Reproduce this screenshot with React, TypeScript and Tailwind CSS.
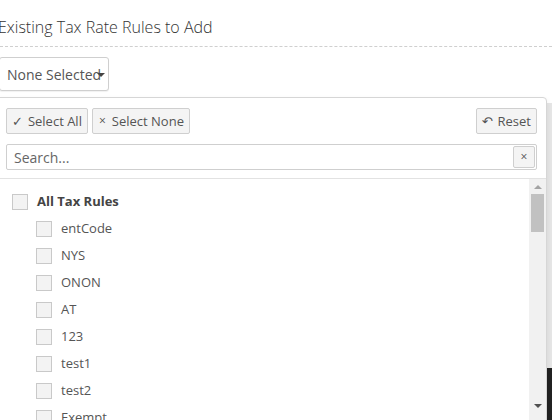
import React from "react";

const children = ["entCode", "NYS", "ONON", "AT", "123", "test1", "test2", "Exempt"];

const Box = () => (
  <span className="inline-block w-[16px] h-[16px] border border-[#c9c9c9] bg-[#f3f3f3] shrink-0" />
);

const ToolButton: React.FC<{ icon: string; label: string; iconClass?: string }> = ({ icon, label, iconClass }) => (
  <button className="h-[26px] px-[5px] flex items-center gap-[5px] border border-[#cfcfcf] bg-[#f4f4f4] rounded-[2px] text-[13px] text-[#555] leading-none">
    <span className={iconClass ?? "text-[12px]"}>{icon}</span>
    <span>{label}</span>
  </button>
);

export default function App() {
  return (
    <div className="relative w-[552px] h-[420px] overflow-hidden bg-white font-['Open_Sans',sans-serif] text-[#555]">
      {/* page elements behind the dropdown */}
      <div className="absolute left-[547px] top-[103px] w-[5px] h-[265px] bg-[#e6e6e6]" />
      <div className="absolute left-[547px] top-[368px] w-[5px] h-[52px] bg-[#222]" />

      <div className="pt-[16px] pb-[8px] border-b border-dashed border-[#cfcfcf]">
        <h2 className="ml-[-2px] text-[16px] leading-[22px] font-light text-[#333]">Existing Tax Rate Rules to Add</h2>
      </div>

      <div className="mt-[10px] ml-[-1px]">
        <button className="relative h-[34px] w-[110px] pl-[7px] text-left border border-[#cfcfcf] rounded-[3px] bg-white text-[14px] text-[#555] shadow-[0_1px_1px_rgba(0,0,0,0.06)]">
          None Selected
          <span className="absolute left-[97px] top-[15px] w-0 h-0 border-l-[4px] border-r-[4px] border-t-[4px] border-l-transparent border-r-transparent border-t-[#444]" />
        </button>
      </div>

      <div className="relative mt-[6px] ml-[-1px] w-[548px] border border-[#d6d6d6] rounded-tr-[4px] bg-white shadow-[0_3px_6px_rgba(0,0,0,0.08)]">
        <div className="px-[6px] pt-[10px]">
          <div className="flex items-center justify-between">
            <div className="flex gap-[4px]">
              <ToolButton icon="✓" label="Select All" iconClass="text-[13px] font-['DejaVu_Sans']" />
              <ToolButton icon="×" label="Select None" iconClass="text-[12px] px-[1px]" />
            </div>
            <div className="mr-[3px]">
              <ToolButton icon="↶" label="Reset" iconClass="text-[13px] font-['DejaVu_Sans']" />
            </div>
          </div>
          <div className="relative mt-[10px] mr-[3px] h-[26px] border border-[#cfcfcf] rounded-[2px] flex items-center">
            <input
              className="flex-1 h-full px-[7px] text-[14px] text-[#555] placeholder:text-[#666] outline-none bg-transparent"
              placeholder="Search..."
            />
            <button className="mr-[1px] w-[22px] h-[22px] flex items-center justify-center border border-[#cfcfcf] bg-[#f4f4f4] rounded-[2px] text-[12px] text-[#555] leading-none">
              ×
            </button>
          </div>
        </div>

        <div className="mt-[8px] border-t border-[#e2e2e2] flex h-[260px]">
          <div className="flex-1 pt-[9px] pl-[12px]">
            <div className="h-[27px] flex items-center gap-[9px]">
              <Box />
              <span className="text-[13px] font-bold text-[#444]">All Tax Rules</span>
            </div>
            {children.map(name => (
              <div key={name} className="h-[27px] pl-[24px] flex items-center gap-[9px]">
                <Box />
                <span className="text-[13px] text-[#555]">{name}</span>
              </div>
            ))}
          </div>
          <div className="w-[17px] bg-[#f1f1f1] flex flex-col items-center">
            <span className="mt-[6px] w-0 h-0 border-l-[4px] border-r-[4px] border-b-[4px] border-l-transparent border-r-transparent border-b-[#a3a3a3]" />
            <span className="mt-[5px] w-[13px] h-[38px] bg-[#c1c1c1]" />
            <span className="mt-[172px] w-0 h-0 border-l-[4px] border-r-[4px] border-t-[4px] border-l-transparent border-r-transparent border-t-[#505050]" />
          </div>
        </div>
      </div>
    </div>
  );
}
